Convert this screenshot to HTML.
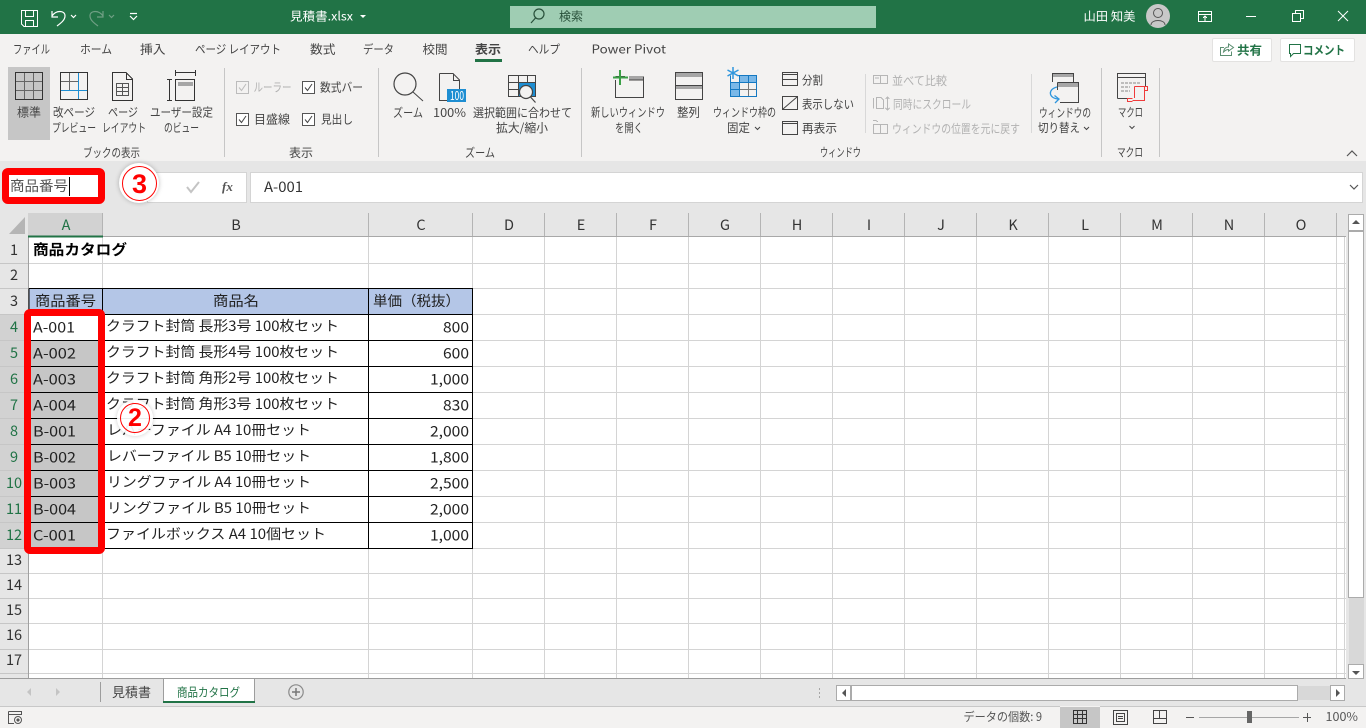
<!DOCTYPE html>
<html lang="ja"><head><meta charset="utf-8"><title>見積書.xlsx</title>
<style>
html,body{margin:0;padding:0;width:1366px;height:728px;overflow:hidden;background:#fff}
body{font-family:"Liberation Sans","Noto Sans CJK JP",sans-serif;position:relative}
.a{position:absolute}
.h{position:absolute;white-space:nowrap;font-size:14.5px;line-height:20px;color:#333;transform:translateX(-50%);font-family:"Noto Sans CJK JP","Liberation Sans",sans-serif}
.rh{color:#217346}
text{font-family:"Noto Sans CJK JP","Liberation Sans",sans-serif;font-size:12px;fill:#444;white-space:pre}
.g{fill:#b1b1b1}
.w{fill:#fff}
.cl{font-size:14.5px;fill:#222}
.cb{font-size:14px;fill:#222}
.ch{font-size:14px;fill:#222}
</style></head><body>
<div class="a" style="left:0;top:0;width:1366px;height:34px;background:#217346"></div>
<div class="a" style="left:510px;top:6px;width:366px;height:22px;background:#9fcdb3"></div>
<div class="a" style="left:0;top:34px;width:1366px;height:127px;background:#f3f2f1"></div>
<div class="a" style="left:0;top:161px;width:1366px;height:52px;background:#e6e6e6"></div>
<div class="a" style="left:8px;top:67px;width:42px;height:73px;background:#c6c6c6"></div>
<div class="a" style="left:475px;top:59px;width:27px;height:3px;background:#217346"></div>
<div class="a" style="left:1212px;top:38px;width:58px;height:22px;background:#fff;border:1px solid #e3e2e1;border-radius:2px"></div>
<div class="a" style="left:1280px;top:38px;width:73px;height:22px;background:#fff;border:1px solid #e3e2e1;border-radius:2px"></div>
<div class="a" style="left:147px;top:172px;width:98px;height:29px;background:#fff;border:1px solid #d4d4d4"></div>
<div class="a" style="left:250px;top:172px;width:1111px;height:29px;background:#fff;border:1px solid #d4d4d4"></div>
<div class="a" style="left:0;top:213px;width:1346px;height:24px;background:#e6e6e6"></div>
<div class="a" style="left:0;top:237px;width:28px;height:441px;background:#e6e6e6"></div>
<div class="a" style="left:28px;top:213px;width:75px;height:24px;background:#d2d2d2"></div>
<div class="a" style="left:0;top:314px;width:28px;height:234px;background:#d2d2d2"></div>
<div class="a" style="left:29px;top:289px;width:444px;height:25px;background:#b4c6e7"></div>
<div class="a" style="left:29px;top:340px;width:74px;height:208px;background:#c6c6c6"></div>
<div class="a" style="left:1346px;top:213px;width:20px;height:466px;background:#e6e6e6"></div>
<div class="a" style="left:0;top:679px;width:1366px;height:27px;background:#e6e6e6"></div>
<div class="a" style="left:0;top:706px;width:1366px;height:22px;background:#f3f2f1"></div>
<div class="a" style="left:1060px;top:707px;width:40px;height:21px;background:#c6c6c6"></div>
<div class="a" style="left:164px;top:679px;width:90px;height:22px;background:#fff"></div>

<svg class="a" style="left:0;top:0" width="1366" height="728" viewBox="0 0 1366 728" fill="none" shape-rendering="crispEdges">
<!-- grid -->
<g stroke="#d4d4d4">
<path d="M29 263.5H1346M29 288.5H1346M473 314.5H1346M473 340.5H1346M473 366.5H1346M473 392.5H1346M473 418.5H1346M473 444.5H1346M473 470.5H1346M473 496.5H1346M473 522.5H1346M473 548.5H1346M29 573.5H1346M29 598.5H1346M29 623.5H1346M29 649.5H1346M29 673.5H1346"/>
<path d="M102.500 237V288M368.500 237V288M102.500 549V678M368.500 549V678M472.500 237V678M544.500 237V678M616.500 237V678M688.500 237V678M760.500 237V678M832.500 237V678M904.500 237V678M976.500 237V678M1048.500 237V678M1120.500 237V678M1192.500 237V678M1264.500 237V678M1336.500 237V678M1344.500 237V678"/>
</g>
<!-- header separators -->
<g stroke="#b4b4b4">
<path d="M102.500 213V237M368.500 213V237M472.500 213V237M544.500 213V237M616.500 213V237M688.500 213V237M760.500 213V237M832.500 213V237M904.500 213V237M976.500 213V237M1048.500 213V237M1120.500 213V237M1192.500 213V237M1264.500 213V237M1336.500 213V237"/>
<path d="M0 263.500H28M0 288.500H28M0 314.500H28M0 340.500H28M0 366.500H28M0 392.500H28M0 418.500H28M0 444.500H28M0 470.500H28M0 496.500H28M0 522.500H28M0 548.500H28M0 573.500H28M0 598.500H28M0 623.500H28M0 649.500H28M0 673.500H28" stroke="#c6c6c6"/>
<path d="M28 236.500H1346" stroke="#a8a8a8"/><path d="M28.500 237V678" stroke="#a0a0a0"/>
</g>
<path d="M28 236.500H103" stroke="#217346" stroke-width="2"/>
<path d="M28.500 314V548" stroke="#217346"/>
<path d="M25 217V234H9Z" fill="#b5b5b5" stroke="none" shape-rendering="auto"/>
<!-- table borders -->
<g stroke="#000">
<path d="M29 288.500H473M29 314.500H473M29 340.500H473M29 366.500H473M29 392.500H473M29 418.500H473M29 444.500H473M29 470.500H473M29 496.500H473M29 522.500H473M29 548.500H473"/>
<path d="M102.500 288V549M368.500 288V549M472.500 288V549M29 288.500V549"/>
</g>
<!-- QAT -->
<g stroke="#fff" stroke-width="1">
<path d="M21.500 10.500H37.500V26.500H24L21.500 24Z"/><path d="M25.500 10.500V16.500H33.500V10.500M25.500 26.500V20.500H33.500V26.500"/>
</g>
<g shape-rendering="auto" fill="none">
<path d="M52 11V17H58M52 16C56 10 65 10 65 16C65 20 61 23 57 26" stroke="#fff" stroke-width="1.200"/>
<path d="M71 15L73.500 17.500L76 15" stroke="#fff" stroke-width="1.200"/>
<path d="M103 11V17H97M103 16C99 10 90 10 90 16C90 20 94 23 98 26" stroke="#6f9f84" stroke-width="1.200"/>
<path d="M109 15L111.500 17.500L114 15" stroke="#6f9f84" stroke-width="1.200"/>
<path d="M130 13.500H137M130 16L133.500 19.500L137 16" stroke="#fff" stroke-width="1.200"/>
<path d="M360 15H366L363 18Z" fill="#fff"/>
<circle cx="539" cy="14" r="5" stroke="#28503a" stroke-width="1.200"/><path d="M535.500 18L531 23" stroke="#28503a" stroke-width="1.200"/>
<circle cx="1158" cy="16" r="12" fill="#c8c8c8"/><circle cx="1158" cy="13" r="4.500" stroke="#555"/><path d="M1151 25C1151 19 1165 19 1165 25" stroke="#555"/>
</g>
<g stroke="#fff">
<path d="M1198.500 11.500H1211.500V21.500H1198.500ZM1198.500 14.500H1211.500M1205 21V16M1203 18L1205 16L1207 18"/>
<path d="M1246 16.500H1256"/>
<path d="M1292.500 13.500H1300.500V21.500H1292.500ZM1295.500 13V10.500H1303.500V18.500H1301"/>
</g>
<path d="M1338 11L1348 21M1348 11L1338 21" stroke="#fff" shape-rendering="auto"/>
<!-- share -->
<g shape-rendering="auto">
<path d="M1224 47.500H1220.500V55.500H1231.500V51.500" stroke="#5c8f72"/>
<path d="M1223.500 52C1224 48.500 1226 47 1228.500 47V44L1233.500 47.500L1228.500 51V49.500C1226.500 49.500 1225 50.500 1223.500 52Z" stroke="#5c8f72"/>
<path d="M1289.500 44.500H1300.500V53.500H1293.500L1290.500 56.500V53.500H1289.500Z" stroke="#217346"/>
</g>
<!-- book views -->
<g stroke="#666"><path d="M24.500 73V99M33.500 73V99M16 81.500H42M16 90.500H42"/>
<path d="M69.500 73V90M61 81.500H78"/></g>
<g stroke="#333">
<path d="M15.500 72.500H42.500V99.500H15.500Z"/>
<path d="M60.500 72.500H87.500V99.500H60.500Z"/>
<path d="M112.500 72.500H126L132.500 79V100.500H112.500Z M126.500 72.500V79.500H132.500"/>
<path d="M116.500 83.500H128.500V95.500H116.500ZM116.500 87.500H128.500M116.500 91.500H128.500M122.500 83.500V95.500" stroke="#555"/>
<path d="M175.500 70V76M195.500 70V76M175 72.500H196"/>
<path d="M175.500 79.500H194.500V100.500H175.500Z"/>
<path d="M169.500 79V100M167 79.500H172M167 100.500H172"/>
</g>
<path d="M61 90.500H87M78.500 73V99" stroke="#1e8ed2" stroke-width="1"/>
<rect x="178" y="82" width="15" height="4" fill="#a6a6a6"/>
<!-- separators -->
<g stroke="#c6c6c6"><path d="M224.500 68V157M378.500 68V157M581.500 68V157M1101.500 68V157M1159.500 68V157"/><path d="M865.500 74V133M1031.500 74V133" stroke="#d8d8d8"/></g>
<!-- checkboxes -->
<rect x="236.500" y="81.500" width="12" height="12" stroke="#bcbcbc" fill="#f3f2f1"/>
<path d="M239 87.500L241.500 90.500L246 84" stroke="#bcbcbc" shape-rendering="auto"/>
<g stroke="#555" fill="#fff"><rect x="302.500" y="81.500" width="12" height="12"/><rect x="236.500" y="113.500" width="12" height="12"/><rect x="302.500" y="113.500" width="12" height="12"/></g>
<path d="M305 87.500L307.500 90.500L312 84M239 119.500L241.500 122.500L246 116M305 119.500L307.500 122.500L312 116" stroke="#444" shape-rendering="auto"/>
<!-- zoom -->
<g shape-rendering="auto" stroke="#444">
<circle cx="405" cy="84" r="11" stroke-width="1.200"/><path d="M413 92L423 101"/>
<path d="M439.500 73.500H453L459.500 80V89M453.500 73.500V80.500H459.500M439.500 73.500V100.500H447"/>
</g>
<rect x="447" y="89" width="19" height="13" fill="#1e8ed2"/>
<rect x="518" y="82" width="18" height="15" fill="#1e8ed2"/>
<g stroke="#444"><path d="M508.500 75.500H535.500V96.500H508.500ZM508.500 82.500H535.500M508.500 89.500H518M518.500 75.500V96.500M527.500 75.500V82.500"/></g>
<g shape-rendering="auto"><circle cx="526" cy="92" r="6.500" fill="#f3f2f1" stroke="#444" stroke-width="1.200"/><path d="M530.500 97L535.500 102.500" stroke="#444" stroke-width="1.200"/></g>
<!-- window group -->
<rect x="629" y="76" width="14" height="4" fill="#a6a6a6"/>
<path d="M615.500 80V97.500H643.500V76.500M615.500 76.500H625M629 80H643" stroke="#444"/>
<path d="M620 70V85M613 77.500H628" stroke="#3aa046" stroke-width="2"/>
<rect x="675" y="73" width="28" height="4" fill="#a6a6a6"/><rect x="675" y="85" width="28" height="4" fill="#a6a6a6"/>
<path d="M675.500 72.500H702.500V99.500H675.500ZM675.500 85.500H702.500" stroke="#444"/>
<rect x="740" y="75" width="17" height="7" fill="#7ab8e8"/><rect x="731" y="82" width="9" height="15" fill="#7ab8e8"/>
<path d="M730.500 75.500V96.500H756.500V75.500H738M730.500 82.500H756.500M730.500 89.500H756.500M739.500 75.500V96.500M748.500 75.500V96.500" stroke="#1579c2"/>
<path d="M740 89.500H756M748.500 83V96" stroke="#777"/>
<path d="M733 67V79M727.500 70L738.500 76M738.500 70L727.500 76" stroke="#2f96dd" stroke-width="1.500" shape-rendering="auto"/>
<g stroke="#444"><path d="M782.500 72.500H797.500V85.500H782.500ZM782.500 74.500H797.500M782.500 79.500H797.500"/>
<path d="M782.500 96.500H797.500V109.500H782.500Z"/>
<path d="M782.500 121.500H797.500V134.500H782.500ZM782.500 123.500H797.500"/></g>
<path d="M783 109L797 97" stroke="#444" shape-rendering="auto"/>
<g stroke="#b6b6b6"><path d="M873.500 75.500H880.500V83.500H873.500ZM880.500 75.500H887.500V83.500H880.500ZM875 78H879"/>
<path d="M873.500 98V108.500M876.500 97.500H881L883.500 100V108.500H876.500ZM887.500 97V110M885.500 99L887.500 97L889.500 99M885.500 108L887.500 110L889.500 108"/>
<path d="M873.500 124.500H880.500V133.500H873.500ZM880.500 124.500H887.500V133.500H880.500ZM878 122C876 120 874 120 873 121"/></g>
<!-- switch -->
<rect x="1052" y="73" width="21" height="4" fill="#a6a6a6"/><rect x="1058" y="83" width="20" height="4" fill="#a6a6a6"/>
<path d="M1052.500 82V73.500H1073.500V82M1057.500 82.500H1078.500V102.500H1060M1057.500 82.500V90" stroke="#444"/>
<path d="M1057 87C1048 89 1048 98 1058 99M1054.500 95.500L1059 99L1055 103" stroke="#2f96dd" stroke-width="1.300" shape-rendering="auto"/>
<path d="M1084 127L1086.500 129.500L1089 127M755 127L757.500 129.500L760 127M1129.500 126L1132 128.500L1134.500 126" stroke="#444" shape-rendering="auto"/>
<!-- macro -->
<path d="M1117.500 98.500V73.500H1145.500V86M1117.500 98.500H1132M1117.500 77.500H1145.500" stroke="#444"/>
<path d="M1121 83H1140M1121 87H1130M1121 91H1130" stroke="#888" stroke-dasharray="3 1"/>
<path d="M1134.500 86.500H1144.500V100.500H1132.500M1134.500 86.500V98M1144.500 86.500H1147.500V90.500H1144.500M1132.500 98.500H1127.500V101.500H1132.500" stroke="#ef3b3b"/>
<path d="M1347 156L1352 151L1357 156" stroke="#555" shape-rendering="auto" stroke-width="1.200"/>
<!-- formula icons -->
<path d="M187 187L191 192L199 182" stroke="#c4c4c4" stroke-width="2" shape-rendering="auto"/>
<path d="M1350 185L1354 189L1358 185" stroke="#555" stroke-width="1.200" shape-rendering="auto"/>
<!-- scrollbars -->
<rect x="1348.500" y="214.500" width="15" height="16" fill="#fff" stroke="#ababab"/>
<rect x="1348.500" y="231.500" width="15" height="366" fill="#fff" stroke="#ababab"/>
<rect x="1349" y="598" width="15" height="66" fill="#d8d8d8"/>
<rect x="1348.500" y="664.500" width="15" height="14" fill="#fff" stroke="#ababab"/>
<path d="M1352 224H1360L1356 220ZM1352 671H1360L1356 675Z" fill="#555" shape-rendering="auto"/>
<rect x="1297" y="686" width="33" height="14" fill="#d8d8d8"/>
<rect x="836.500" y="685.500" width="14" height="15" fill="#fff" stroke="#ababab"/>
<rect x="851.500" y="685.500" width="446" height="15" fill="#fff" stroke="#ababab"/>
<rect x="1330.500" y="685.500" width="14" height="15" fill="#fff" stroke="#ababab"/>
<path d="M846 689V697L842 693ZM1336 689V697L1340 693Z" fill="#555" shape-rendering="auto"/>
<path d="M819.500 688V690M819.500 692V694M819.500 696V698" stroke="#a6a6a6"/>
<!-- tabs -->
<path d="M0 678.500H163M255 678.500H1346" stroke="#9d9d9d"/>
<path d="M163.500 678V701M254.500 678V701M163 678.500H255" stroke="#9d9d9d"/>
<path d="M100.500 682V702" stroke="#9d9d9d"/>
<path d="M163 702H255" stroke="#217346" stroke-width="2"/>
<path d="M0 706.500H1060M1100 706.500H1366" stroke="#c8c8c8"/>
<path d="M31 688V696L27 692ZM56 688V696L60 692Z" fill="#c4c4c4" shape-rendering="auto"/>
<g shape-rendering="auto"><circle cx="296" cy="692" r="7.200" stroke="#8a8a8a" stroke-width="1.200"/><path d="M292 692H300M296 688V696" stroke="#777" stroke-width="1.500"/></g>
<!-- status icons -->
<g stroke="#555"><path d="M8.500 711.500H21.500V715M8.500 711.500V723.500H14M8.500 714.500H21.500"/><circle cx="18" cy="720" r="3.500" shape-rendering="auto"/></g>
<circle cx="18" cy="720" r="1.500" fill="#555"/>
<path d="M1073.500 710.500H1086.500V723.500H1073.500ZM1073.500 714.500H1086.500M1073.500 718.500H1086.500M1077.500 710.500V723.500M1082.500 710.500V723.500" stroke="#333"/>
<path d="M1113.500 710.500H1127.500V724.500H1113.500ZM1116.500 713.500H1124.500V721.500H1116.500ZM1118 716.500H1123M1118 718.500H1123" stroke="#444"/>
<path d="M1153.500 710.500H1166.500V723.500H1153.500ZM1153.500 718.500H1166.500M1159.500 710.500V718.500" stroke="#444"/>
<path d="M1186 717.500H1194M1303 717.500H1311M1307.500 713V722" stroke="#555"/>
<path d="M1199 717.500H1299" stroke="#a6a6a6"/>
<rect x="1247" y="711" width="5" height="12" fill="#666"/>
</svg>

<!-- col headers -->
<div class="h rh" style="left:66px;top:215px">A</div>
<div class="h" style="left:236px;top:215px">B</div>
<div class="h" style="left:421px;top:215px">C</div>
<div class="h" style="left:509px;top:215px">D</div>
<div class="h" style="left:581px;top:215px">E</div>
<div class="h" style="left:653px;top:215px">F</div>
<div class="h" style="left:725px;top:215px">G</div>
<div class="h" style="left:797px;top:215px">H</div>
<div class="h" style="left:869px;top:215px">I</div>
<div class="h" style="left:941px;top:215px">J</div>
<div class="h" style="left:1013px;top:215px">K</div>
<div class="h" style="left:1085px;top:215px">L</div>
<div class="h" style="left:1157px;top:215px">M</div>
<div class="h" style="left:1229px;top:215px">N</div>
<div class="h" style="left:1301px;top:215px">O</div>
<!-- row headers -->
<div class="h" style="left:14px;top:240px">1</div>
<div class="h" style="left:14px;top:265px">2</div>
<div class="h" style="left:14px;top:291px">3</div>
<div class="h rh" style="left:14px;top:317px">4</div>
<div class="h rh" style="left:14px;top:343px">5</div>
<div class="h rh" style="left:14px;top:369px">6</div>
<div class="h rh" style="left:14px;top:395px">7</div>
<div class="h rh" style="left:14px;top:421px">8</div>
<div class="h rh" style="left:14px;top:447px">9</div>
<div class="h rh" style="left:14px;top:473px">10</div>
<div class="h rh" style="left:14px;top:499px">11</div>
<div class="h rh" style="left:14px;top:525px">12</div>
<div class="h" style="left:14px;top:550px">13</div>
<div class="h" style="left:14px;top:575px">14</div>
<div class="h" style="left:14px;top:600px">15</div>
<div class="h" style="left:14px;top:625px">16</div>
<div class="h" style="left:14px;top:650px">17</div>

<svg class="a" style="left:0;top:0" width="1366" height="728" viewBox="0 0 1366 728">
<!-- title -->
<text class="w" x="290" y="20.500" textLength="63" lengthAdjust="spacingAndGlyphs">見積書.xlsx</text>
<text x="559" y="20.500" textLength="24" lengthAdjust="spacingAndGlyphs" style="fill:#28503a">検索</text>
<text class="w" x="1083.500" y="20.500" textLength="52" lengthAdjust="spacingAndGlyphs">山田 知美</text>
<!-- tabs -->
<text x="13" y="53.500" textLength="37" lengthAdjust="spacingAndGlyphs">ファイル</text>
<text x="80" y="53.500" textLength="32" lengthAdjust="spacingAndGlyphs">ホーム</text>
<text x="140" y="53.500" textLength="25.500" lengthAdjust="spacingAndGlyphs">挿入</text>
<text x="195" y="53.500" textLength="86" lengthAdjust="spacingAndGlyphs">ページ レイアウト</text>
<text x="310" y="53.500" textLength="25.500" lengthAdjust="spacingAndGlyphs">数式</text>
<text x="363" y="53.500" textLength="31" lengthAdjust="spacingAndGlyphs">データ</text>
<text x="422.500" y="53.500" textLength="25" lengthAdjust="spacingAndGlyphs">校閲</text>
<text x="475" y="53.500" textLength="26" lengthAdjust="spacingAndGlyphs" font-weight="700">表示</text>
<text x="528" y="53.500" textLength="32" lengthAdjust="spacingAndGlyphs">ヘルプ</text>
<text x="591.500" y="53.500" textLength="74.500" lengthAdjust="spacingAndGlyphs">Power Pivot</text>
<text x="1237" y="54.500" textLength="25" lengthAdjust="spacingAndGlyphs" font-weight="700" style="fill:#217346">共有</text>
<text x="1303" y="54.500" textLength="42" lengthAdjust="spacingAndGlyphs" font-weight="700" style="fill:#217346">コメント</text>
<!-- ribbon labels -->
<text x="17" y="116.500" textLength="24" lengthAdjust="spacingAndGlyphs">標準</text>
<text x="53" y="116.500" textLength="42" lengthAdjust="spacingAndGlyphs">改ページ</text>
<text x="52" y="132" textLength="44" lengthAdjust="spacingAndGlyphs">プレビュー</text>
<text x="108" y="116.500" textLength="30" lengthAdjust="spacingAndGlyphs">ページ</text>
<text x="102" y="132" textLength="44" lengthAdjust="spacingAndGlyphs">レイアウト</text>
<text x="150" y="116.500" textLength="63" lengthAdjust="spacingAndGlyphs">ユーザー設定</text>
<text x="164" y="132" textLength="35" lengthAdjust="spacingAndGlyphs">のビュー</text>
<text x="83" y="157" textLength="57" lengthAdjust="spacingAndGlyphs">ブックの表示</text>
<text class="g" x="253.500" y="91.500" textLength="38" lengthAdjust="spacingAndGlyphs">ルーラー</text>
<text x="320" y="91.500" textLength="43" lengthAdjust="spacingAndGlyphs">数式バー</text>
<text x="254" y="123.500" textLength="36" lengthAdjust="spacingAndGlyphs">目盛線</text>
<text x="321" y="123.500" textLength="32" lengthAdjust="spacingAndGlyphs">見出し</text>
<text x="289" y="157" textLength="24" lengthAdjust="spacingAndGlyphs">表示</text>
<text x="393" y="117" textLength="30" lengthAdjust="spacingAndGlyphs">ズーム</text>
<text x="433" y="117" textLength="33" lengthAdjust="spacingAndGlyphs">100%</text>
<text x="473" y="117" textLength="99" lengthAdjust="spacingAndGlyphs">選択範囲に合わせて</text>
<text x="496" y="132" textLength="52" lengthAdjust="spacingAndGlyphs">拡大/縮小</text>
<text x="465" y="157" textLength="30" lengthAdjust="spacingAndGlyphs">ズーム</text>
<text class="w" x="450" y="100" textLength="14" lengthAdjust="spacingAndGlyphs">100</text>
<text x="591" y="116.500" textLength="74" lengthAdjust="spacingAndGlyphs">新しいウィンドウ</text>
<text x="615" y="132" textLength="28" lengthAdjust="spacingAndGlyphs">を開く</text>
<text x="677" y="116.500" textLength="23" lengthAdjust="spacingAndGlyphs">整列</text>
<text x="713" y="116.500" textLength="63" lengthAdjust="spacingAndGlyphs">ウィンドウ枠の</text>
<text x="727" y="132" textLength="23" lengthAdjust="spacingAndGlyphs">固定</text>
<text x="802" y="84.500" textLength="21" lengthAdjust="spacingAndGlyphs">分割</text>
<text x="802" y="108.500" textLength="52" lengthAdjust="spacingAndGlyphs">表示しない</text>
<text x="802" y="132.500" textLength="35" lengthAdjust="spacingAndGlyphs">再表示</text>
<text class="g" x="892" y="85" textLength="55" lengthAdjust="spacingAndGlyphs">並べて比較</text>
<text class="g" x="893" y="108.500" textLength="78" lengthAdjust="spacingAndGlyphs">同時にスクロール</text>
<text class="g" x="892" y="133" textLength="128" lengthAdjust="spacingAndGlyphs">ウィンドウの位置を元に戻す</text>
<text x="820" y="156.500" textLength="41" lengthAdjust="spacingAndGlyphs">ウィンドウ</text>
<text x="1039" y="117" textLength="52" lengthAdjust="spacingAndGlyphs">ウィンドウの</text>
<text x="1038" y="132" textLength="42" lengthAdjust="spacingAndGlyphs">切り替え</text>
<text x="1118" y="116.500" textLength="25" lengthAdjust="spacingAndGlyphs">マクロ</text>
<text x="1117" y="156.500" textLength="26" lengthAdjust="spacingAndGlyphs">マクロ</text>
<!-- formula -->
<text x="264" y="192" textLength="39" lengthAdjust="spacingAndGlyphs" style="font-size:14px;fill:#333">A-001</text>
<text x="222" y="191" font-style="italic" font-weight="700" style="font-family:'Liberation Serif',serif;font-size:13px;fill:#555">fx</text>
<!-- cells -->
<text x="33" y="255" textLength="94" lengthAdjust="spacingAndGlyphs" font-weight="700" style="font-size:14.500px;fill:#000">商品カタログ</text>
<text class="ch" x="35" y="306" textLength="61" lengthAdjust="spacingAndGlyphs">商品番号</text>
<text class="ch" x="213" y="306" textLength="46" lengthAdjust="spacingAndGlyphs">商品名</text>
<text class="ch" x="373" y="306" textLength="87" lengthAdjust="spacingAndGlyphs">単価（税抜）</text>
<text class="cl" x="33" y="332.500" textLength="42" lengthAdjust="spacingAndGlyphs">A-001</text>
<text class="cb" x="106" y="331" textLength="233" lengthAdjust="spacingAndGlyphs">クラフト封筒 長形3号 100枚セット</text>
<text class="cl" x="443" y="332.500" textLength="26" lengthAdjust="spacingAndGlyphs">800</text>
<text class="cl" x="33" y="358.500" textLength="43" lengthAdjust="spacingAndGlyphs">A-002</text>
<text class="cb" x="106" y="357" textLength="233" lengthAdjust="spacingAndGlyphs">クラフト封筒 長形4号 100枚セット</text>
<text class="cl" x="443" y="358.500" textLength="26" lengthAdjust="spacingAndGlyphs">600</text>
<text class="cl" x="33" y="384.500" textLength="43" lengthAdjust="spacingAndGlyphs">A-003</text>
<text class="cb" x="106" y="383" textLength="233" lengthAdjust="spacingAndGlyphs">クラフト封筒 角形2号 100枚セット</text>
<text class="cl" x="430" y="384.500" textLength="39" lengthAdjust="spacingAndGlyphs">1,000</text>
<text class="cl" x="33" y="410.500" textLength="43" lengthAdjust="spacingAndGlyphs">A-004</text>
<text class="cb" x="106" y="409" textLength="233" lengthAdjust="spacingAndGlyphs">クラフト封筒 角形3号 100枚セット</text>
<text class="cl" x="443" y="410.500" textLength="26" lengthAdjust="spacingAndGlyphs">830</text>
<text class="cl" x="33" y="436.500" textLength="43" lengthAdjust="spacingAndGlyphs">B-001</text>
<text class="cb" x="107" y="435" textLength="204" lengthAdjust="spacingAndGlyphs">レバーファイル A4 10冊セット</text>
<text class="cl" x="430" y="436.500" textLength="39" lengthAdjust="spacingAndGlyphs">2,000</text>
<text class="cl" x="33" y="462.500" textLength="43" lengthAdjust="spacingAndGlyphs">B-002</text>
<text class="cb" x="107" y="461" textLength="204" lengthAdjust="spacingAndGlyphs">レバーファイル B5 10冊セット</text>
<text class="cl" x="430" y="462.500" textLength="39" lengthAdjust="spacingAndGlyphs">1,800</text>
<text class="cl" x="33" y="488.500" textLength="43" lengthAdjust="spacingAndGlyphs">B-003</text>
<text class="cb" x="107" y="487" textLength="204" lengthAdjust="spacingAndGlyphs">リングファイル A4 10冊セット</text>
<text class="cl" x="430" y="488.500" textLength="39" lengthAdjust="spacingAndGlyphs">2,500</text>
<text class="cl" x="33" y="514.500" textLength="43" lengthAdjust="spacingAndGlyphs">B-004</text>
<text class="cb" x="107" y="513" textLength="204" lengthAdjust="spacingAndGlyphs">リングファイル B5 10冊セット</text>
<text class="cl" x="430" y="514.500" textLength="39" lengthAdjust="spacingAndGlyphs">2,000</text>
<text class="cl" x="33" y="540.500" textLength="43" lengthAdjust="spacingAndGlyphs">C-001</text>
<text class="cb" x="106" y="539" textLength="220" lengthAdjust="spacingAndGlyphs">ファイルボックス A4 10個セット</text>
<text class="cl" x="430" y="540.500" textLength="39" lengthAdjust="spacingAndGlyphs">1,000</text>
<!-- sheet tabs -->
<text x="112" y="697" textLength="39" lengthAdjust="spacingAndGlyphs" style="font-size:13px">見積書</text>
<text x="177" y="696.500" textLength="63" lengthAdjust="spacingAndGlyphs" style="fill:#217346">商品カタログ</text>
<!-- status -->
<text x="963.500" y="721" textLength="78.500" lengthAdjust="spacingAndGlyphs" style="fill:#555">データの個数: 9</text>
<text x="1325.500" y="721" textLength="32.500" lengthAdjust="spacingAndGlyphs" style="fill:#555">100%</text>
</svg>

<!-- annotations -->
<div class="a" style="left:2px;top:168px;width:103px;height:36px;box-sizing:border-box;border:7px solid #f00;border-radius:6px;background:#fff"></div>
<svg class="a" style="left:0;top:165px" width="110" height="40" viewBox="0 165 110 40">
<text x="10" y="191" textLength="58" lengthAdjust="spacingAndGlyphs" style="font-size:14px;fill:#555">商品番号</text>
<path d="M69.500 177V196" stroke="#000" shape-rendering="crispEdges"/>
</svg>
<div class="a" style="left:24px;top:309px;width:81px;height:245px;box-sizing:border-box;border:7px solid #f00;border-radius:6px"></div>
<div class="a" style="left:119px;top:163px;width:40px;height:40px;background:#fff;border-radius:50%;box-shadow:0 0 5px rgba(0,0,0,.25)"></div>
<div class="a" style="left:122px;top:166px;width:35px;height:35px;box-sizing:border-box;border:1.500px solid #f00;border-radius:50%;background:#fff;color:#f00;font-weight:700;font-size:27px;line-height:35px;text-align:center">3</div>
<div class="a" style="left:117px;top:400px;width:36px;height:36px;background:rgba(255,255,255,.92);border-radius:50%;box-shadow:0 0 5px rgba(0,0,0,.2)"></div>
<div class="a" style="left:120px;top:403px;width:30px;height:30px;box-sizing:border-box;border:1.500px solid #f00;border-radius:50%;color:#f00;font-weight:700;font-size:25px;line-height:28px;text-align:center">2</div>
</body></html>
